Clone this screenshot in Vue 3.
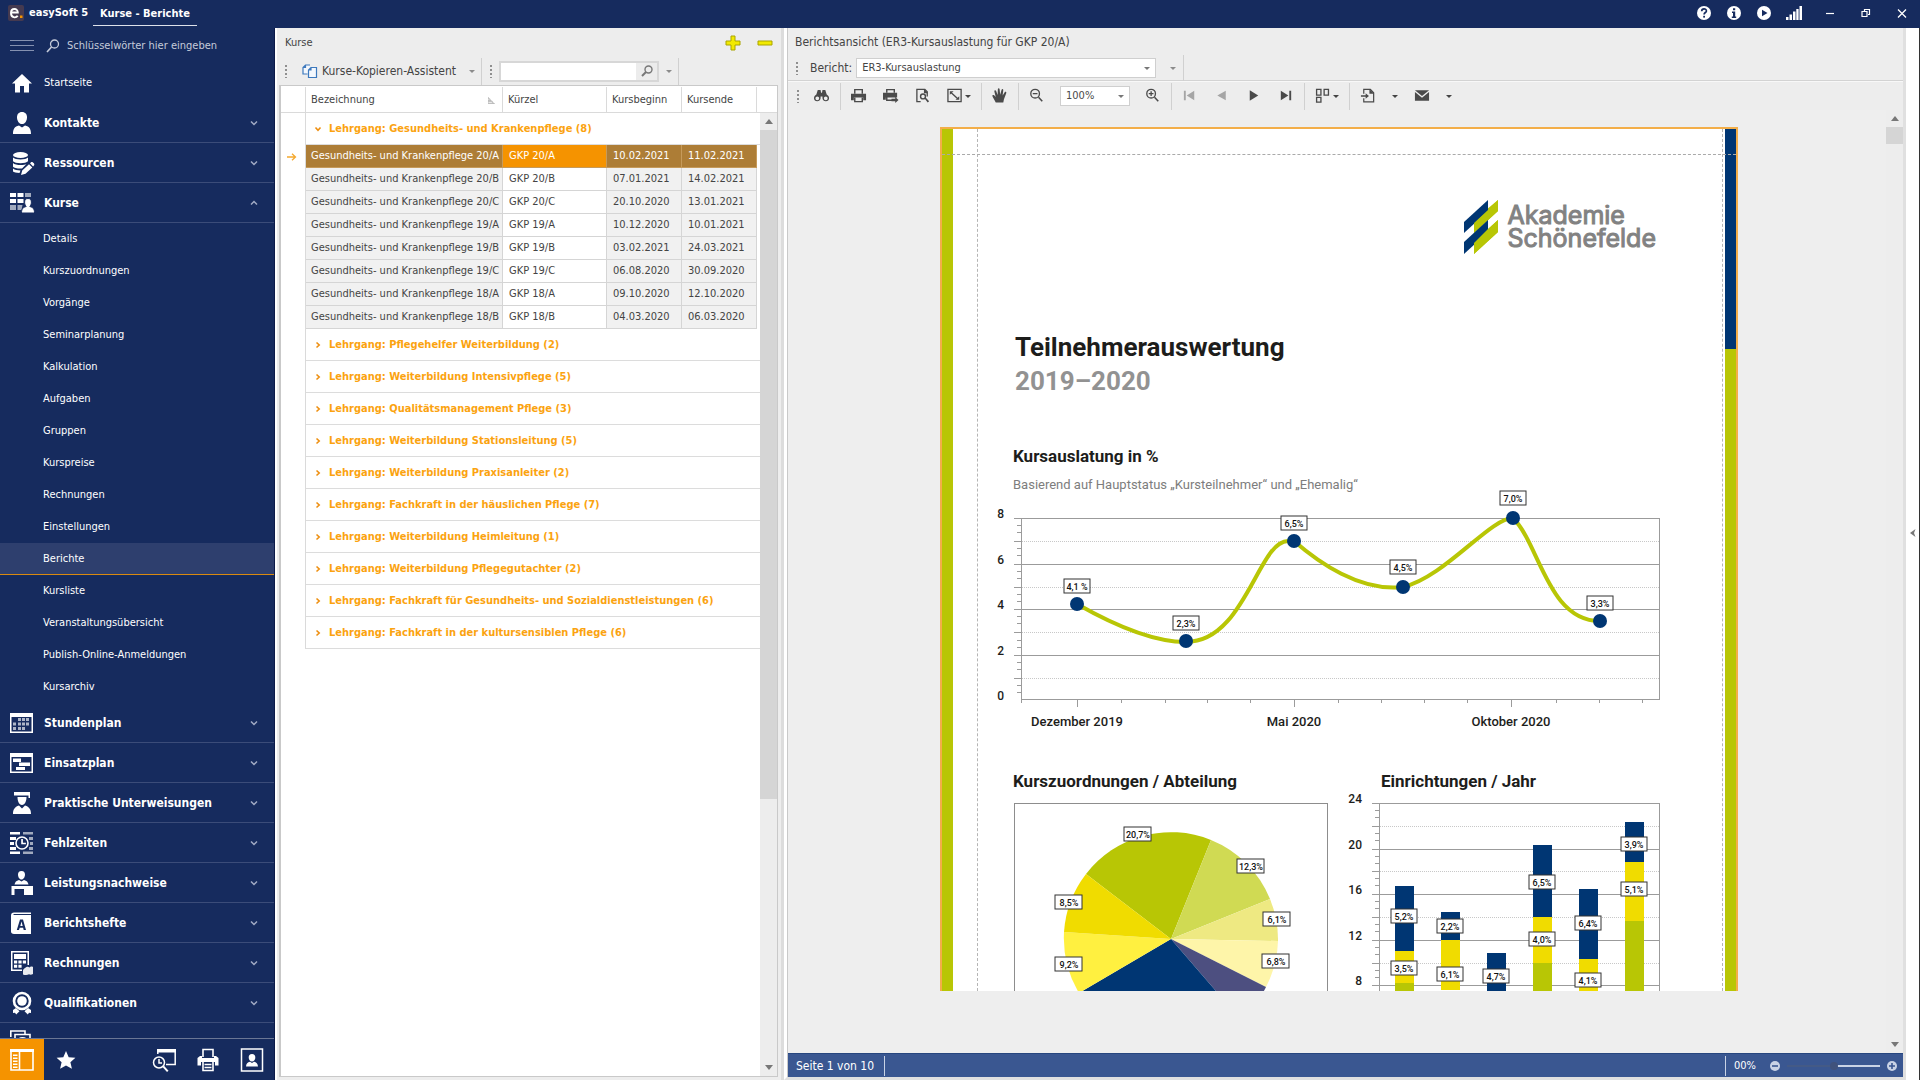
<script setup>
import { ref } from 'vue'

const icons = {
  home: '<path d="M12 3 22 12.500H19V21.500H14V15H10V21.500H5V12.500H2Z"/>',
  person: '<path d="M12 1c3.400 0 5 2.300 5 5.200 0 3.300-1.800 6.800-5 6.800s-5-3.500-5-6.800C7 3.300 8.600 1 12 1z"/><path d="M3 23c0-5 1.500-7.500 6-8.500l3 2 3-2c4.500 1 6 3.500 6 8.500z"/>',
  database: '<ellipse cx="10.500" cy="4" rx="7.500" ry="3"/><path d="M3 6.500c2 2.500 13 2.500 15 0v3.800c-2 2.500-13 2.500-15 0zM3 12c2 2.500 11 2.700 13.500 1L12 17.500C8 17.800 4 17 3 15.800zM3 17.500c2 1.500 4 1.900 7.500 1.900L9.500 22C6 22 4 21.500 3 20.600z"/><path d="M11 24l1.200-4.500 6.800-6.300 3.300 3.300-6.800 6.300zM20 12.300l1.300-1.200c1.200-.6 3.600 1.700 3 3l-1.200 1.300z"/>',
  courses: '<path d="M0 2h6v4H0zM7.500 2h6v4h-6zM0 8h6v4H0zM7.500 8h6v4h-6z"/><path opacity=".6" d="M15 2h6v4h-6zM0 14h6v5H0zM7.500 14h5l-1 5h-4z"/><path stroke="#162b5e" stroke-width="1" d="M18 7.500c2.400 0 3.400 1.600 3.400 3.600 0 2-.7 3.400-1.600 4.400 3 .8 4.700 2.200 4.700 6.500H11.500c0-4.300 1.700-5.700 4.700-6.500-.9-1-1.600-2.400-1.600-4.400 0-2 1-3.600 3.400-3.600z"/>',
  calendar: '<path d="M0 2h23v20H0zM1.500 6v14.500h20V6z" fill-rule="evenodd"/><path opacity=".65" d="M8 7h3v3H8zM12 7h3v3h-3zM16 7h3v3h-3zM3 11.500h3v3H3zM8 11.500h3v3H8zM12 11.500h3v3h-3zM16 11.500h3v3h-3zM3 16h3v3H3zM8 16h3v3H8zM12 16h3v3h-3z"/>',
  plan: '<path d="M0 2h23v20H0zM1.500 6v14.500h20V6z" fill-rule="evenodd"/><path d="M3 7.500h8V11H3zM9 11.500h11V15H9zM6 16h9v3H6z"/>',
  graduate: '<path d="M4 1h16v6h-1.500V4.500H4zM7.500 6h9c0 4-1.500 8-4.500 8S7.500 10 7.500 6z"/><path d="M3 23c0-4.500 1.500-7 6-8.500l3 3 3-3c4.500 1.500 6 4 6 8.500z"/>',
  absence: '<path d="M0 1h10v2.500H0zM0 6h6v3H0zM0 11h4v3H0zM0 16h6v3H0zM0 20.500h10V23H0z"/><path opacity=".6" d="M13 1h10v2.500H13zM19 6h4v3h-4zM20 11h3v3h-3zM19 16h4v3h-4zM13 20.500h10V23H13z"/><circle cx="12" cy="12" r="6" fill="none" stroke="#fff" stroke-width="1.600"/><path d="M11.200 8h1.700v3.700h3v1.600h-4.700z"/>',
  desk: '<path d="M11.500 0c2.500 0 3.500 1.700 3.500 3.600 0 2.400-1.400 5-3.500 5S8 6 8 3.600C8 1.700 9 0 11.500 0zM4.500 13.500c.5-2.600 1.800-3.900 4.500-4.600l2.500 1.500L14 8.900c2.700.7 4 2 4.500 4.600zM1.500 15H23v9h-9v-6H4.500v6h-3z"/>',
  book: '<path d="M4 1.500h17V3H4C3 3 3 4 4 4h17v19H4c-2 0-3-1-3-2.500V4.500C1 2.500 2 1.500 4 1.500z"/><path fill="#162b5e" fill-rule="evenodd" d="M10 8.500h3L16 19h-2.300l-.6-2.300H9.700L9 19H6.800zm1.500 2L10.300 15h2.400z"/>',
  calculator: '<path fill-rule="evenodd" d="M1 0h18v14h-1.500V1.500h-15v17H12V20H1z"/><path d="M4 3h12v5H4zM4 9.500h3.200v3H4zM8.400 9.500h3.200v3H8.400zM12.800 9.500H16v3h-3.200zM4 13.800h3.200v3H4zM8.400 13.800h3.200v3H8.400z"/><path opacity=".9" d="M15 17c2-1.500 3-1.500 4.500-.5.700-1 2-1.300 3.500-.5v7c-1.500 1-3 1-4 .3-1.500 1-4 1-6 .2v-4c.5-1.500 1-2 2-2.500z"/>',
  award: '<circle cx="12" cy="10" r="8" fill="none" stroke="#fff" stroke-width="2.600"/><circle cx="12" cy="10" r="4.800"/><path d="M6 17l3.500 3.300L6.200 23.500l-1.200-1.700-2 .2v-3zM18 17l-3.500 3.300 3.300 3.200 1.200-1.700 2 .2v-3z"/>',
  stack: '<path fill="none" stroke="#fff" stroke-width="1.600" d="M.8 6V0H15v3M5 12V3.500h15V8M8 9c2-3 7-3 9 0"/>',
  layout: '<path fill="none" stroke="#fff" stroke-width="1.600" d="M1 3h22v19H1zM9.500 4v18"/><path d="M0 1h24v3H0zM3 6.500h4.500V8H3zM3 9.500h4.500V11H3zM3 12.500h4.500V14H3zM3 15.500h4.500V17H3zM3 18.500h4.500V20H3z"/>',
  star: '<path d="M12 3l2.700 6.200 6.700.6-5 4.400 1.500 6.600L12 17.400l-5.900 3.400 1.500-6.600-5-4.400 6.700-.6z"/>',
  history: '<path d="M5 1h19v3.500H5z"/><path fill="none" stroke="#fff" stroke-width="1.500" d="M5.800 6V3M23.200 3v13.500H14"/><circle cx="7" cy="14.500" r="5.500" fill="none" stroke="#fff" stroke-width="1.500"/><path fill="none" stroke="#fff" stroke-width="1.500" d="M7 11v4h3"/><path d="M10.500 19l1.500-1.300 4.500 5-1.500 1.300z"/>',
  printer: '<path fill="none" stroke="#fff" stroke-width="1.600" d="M7 9V1.500h10V9"/><path d="M4 8h2v2h12V8h2l2.500 2v7.500H19V14H5v3.500H1.500V10z"/><path fill="none" stroke="#fff" stroke-width="1.600" d="M7 14v8.500h10V14M8.500 16.500h7M8.500 19.500h7"/>',
  card: '<path fill="none" stroke="#fff" stroke-width="1.500" d="M1.500 1h21v22h-21z"/><path d="M12 6c2.300 0 3.300 1.500 3.300 3.400 0 2-1.300 4.100-3.300 4.100s-3.300-2.100-3.300-4.100C8.700 7.500 9.700 6 12 6zM6 18.500c.3-3 1.500-4.200 4-4.700l2 1.200 2-1.200c2.500.5 3.700 1.700 4 4.700z"/>',
}

const tools = {
  find: '<path fill-rule="evenodd" d="M4 2h3l.5 3h1L9 2h3l1.500 5c1.500 1 2.500 2.200 2.500 4 0 2-1.500 3.200-3.400 3.200S9.200 13 9 11V9H7v2c-.2 2-1.700 3.200-3.600 3.200S0 13 0 11c0-1.800 1-3 2.500-4zM3.500 9a2 2 0 100 4 2 2 0 000-4zm9 0a2 2 0 100 4 2 2 0 000-4z"/>',
  print: '<path fill="none" stroke="currentColor" stroke-width="1.500" d="M4 6V1.700h8V6"/><path d="M0 6h16v7h-3v-3H3v3H0z"/><path fill="none" stroke="currentColor" stroke-width="1.500" d="M4 10v4.500h8V10"/>',
  quick: '<path fill="none" stroke="currentColor" stroke-width="1.500" d="M4 5V1.700h8V5M4 9v4h6"/><path d="M0 5h15v5H3v2.500H0zM13 9.500l3.500 3.200-3.500 3.200V14H9v-2.500h4z"/>',
  setup: '<path fill="none" stroke="currentColor" stroke-width="1.400" d="M6 14.500H2v-13h8.500L13 4v5"/><circle cx="8.500" cy="9" r="2.600" fill="none" stroke="currentColor" stroke-width="1.500"/><path d="M10 11l1.300-1 3.700 4-1.500 1.300zM9.500 1v4.500H14z"/>',
  scale: '<path fill="none" stroke="currentColor" stroke-width="1.400" d="M1 1.500h14v13H1zM4.500 5l7 6.500"/><path d="M3 3.500h4L3 7.300zM13 12.500H9l4-3.800z"/>',
  hand: '<path d="M4 15.500C3 13 .5 9.500.3 8.200c0-1 1.200-1.200 2-.4L4 9.500 2.500 3.600c0-1.200 1.400-1.500 1.900-.4L6 7.500 6.200 1.200c.2-1.200 1.700-1.200 1.900 0L8.700 7.300l1.500-5.500c.5-1 1.800-.7 1.800.4L11.300 8l2.200-3.600c.8-.8 1.900-.2 1.700.8L12.700 12l-.7 3.500z"/>',
  minus: '<circle cx="6.500" cy="6" r="4.600" fill="none" stroke="currentColor" stroke-width="1.400"/><path d="M4 5.300h5v1.400H4zM9.500 10.300l1.200-1 4 4.200-1.200 1.200z"/>',
  plus: '<circle cx="6.500" cy="6" r="4.600" fill="none" stroke="currentColor" stroke-width="1.400"/><path d="M4 5.300h5v1.400H4zM5.800 3.500h1.400v5H5.800zM9.500 10.300l1.200-1 4 4.200-1.200 1.200z"/>',
  first: '<path d="M2 3h2v10H2zM13 3v10L5 8z"/>',
  prev: '<path d="M12.500 3v10L3.500 8z"/>',
  next: '<path d="M4 2.500v11L13 8z"/>',
  last: '<path d="M12 3h2v10h-2zM3 3v10l8-5z"/>',
  pages: '<path fill="none" stroke="currentColor" stroke-width="1.400" d="M1.700 1.500h4.600v6H1.700zM9.700 1.500h4.600v6H9.700zM1.700 10h4.600v5H1.700z"/>',
  export: '<path fill="none" stroke="currentColor" stroke-width="1.300" d="M4 6V1.500h7L14.500 5v9.800H4V11"/><path d="M10 1v5h5zM1 7.800h5V5.500l3.500 3L6 11.500V9.200H1z"/>',
  mail: '<path d="M1 2.500h15l-7.500 6zM1 4.300l7.500 6 7.500-6V13.500H1z"/>',
}

const subItems = ['Details', 'Kurszuordnungen', 'Vorgänge', 'Seminarplanung', 'Kalkulation', 'Aufgaben', 'Gruppen', 'Kurspreise', 'Rechnungen', 'Einstellungen', 'Berichte', 'Kursliste', 'Veranstaltungsübersicht', 'Publish-Online-Anmeldungen', 'Kursarchiv']
const topItems = [
  { label: 'Kontakte', icon: 'person' },
  { label: 'Ressourcen', icon: 'database' },
  { label: 'Kurse', icon: 'courses', open: true },
]
const lowerItems = [
  { label: 'Stundenplan', icon: 'calendar' },
  { label: 'Einsatzplan', icon: 'plan' },
  { label: 'Praktische Unterweisungen', icon: 'graduate' },
  { label: 'Fehlzeiten', icon: 'absence' },
  { label: 'Leistungsnachweise', icon: 'desk' },
  { label: 'Berichtshefte', icon: 'book' },
  { label: 'Rechnungen', icon: 'calculator' },
  { label: 'Qualifikationen', icon: 'award' },
]

const courses = [
  ['20/A', '10.02.2021', '11.02.2021'],
  ['20/B', '07.01.2021', '14.02.2021'],
  ['20/C', '20.10.2020', '13.01.2021'],
  ['19/A', '10.12.2020', '10.01.2021'],
  ['19/B', '03.02.2021', '24.03.2021'],
  ['19/C', '06.08.2020', '30.09.2020'],
  ['18/A', '09.10.2020', '12.10.2020'],
  ['18/B', '04.03.2020', '06.03.2020'],
]
const groups = [
  'Pflegehelfer Weiterbildung (2)',
  'Weiterbildung Intensivpflege (5)',
  'Qualitätsmanagement Pflege (3)',
  'Weiterbildung Stationsleitung (5)',
  'Weiterbildung Praxisanleiter (2)',
  'Fachkraft in der häuslichen Pflege (7)',
  'Weiterbildung Heimleitung (1)',
  'Weiterbildung Pflegegutachter (2)',
  'Fachkraft für Gesundheits- und Sozialdienstleistungen (6)',
  'Fachkraft in der kultursensiblen Pflege (6)',
]

const zoom = ref(50)

/* Line chart */
const lineSolid = [33, 79, 124, 170]
const lineDotted = [56, 102, 147, 193]
const lineMinor = [40, 47, 63, 70, 86, 93, 109, 116, 131, 138, 155, 162, 177, 184, 200, 207]
const lineY = [[8, 33], [6, 79], [4, 124], [2, 170], [0, 215]]
const lineXMinor = [26, 126, 170, 212, 255, 343, 386, 429, 472, 561, 604, 647]
const lineX = [[82, 'Dezember 2019'], [299, 'Mai 2020'], [516, 'Oktober 2020']]
const points = [
  { x: 82, y: 119, t: '4,1 %', ly: 94 },
  { x: 191, y: 156, t: '2,3%', ly: 131 },
  { x: 299, y: 56, t: '6,5%', ly: 31 },
  { x: 408, y: 102, t: '4,5%', ly: 75 },
  { x: 518, y: 33, t: '7,0%', ly: 6 },
  { x: 605, y: 136, t: '3,3%', ly: 111 },
]

/* Pie chart: boundary vectors from the centre, clockwise */
const slices = [
  { a: [-85, -65], b: [40, -99], c: '#b8c605' },
  { a: [40, -99], b: [99, -40], c: '#d0da53' },
  { a: [99, -40], b: [107, 2], c: '#eee982' },
  { a: [107, 2], b: [95, 48], c: '#fef5a9' },
  { a: [95, 48], b: [70, 81], c: '#4d4f80' },
  { a: [70, 81], b: [-92, 54], c: '#003673' },
  { a: [-92, 54], b: [-107, -7], c: '#fff040' },
  { a: [-107, -7], b: [-85, -65], c: '#f0dc00' },
]
const slicePath = (s) => `M157 136L${157 + s.a[0]} ${136 + s.a[1]}A107 107 0 0 1 ${157 + s.b[0]} ${136 + s.b[1]}Z`
const pieLabels = [[125, 24, '20,7%'], [238, 56, '12,3%'], [56, 92, '8,5%'], [264, 109, '6,1%'], [56, 154, '9,2%'], [263, 151, '6,8%']]

/* Bar chart */
const barY = [[24, 8], [20, 54], [16, 99], [12, 145], [8, 190]]
const barDotted = [31, 76, 122, 168]
const barMinor = [15, 22, 38, 45, 61, 68, 83, 90, 106, 113, 129, 136, 152, 159, 175, 182]
const bars = [
  { x: 50, s: [[91, 65, 'n'], [156, 32, 'y'], [188, 8, 'g']], l: [[114, '5,2%'], [166, '3,5%']] },
  { x: 96, s: [[117, 28, 'n'], [145, 50, 'y']], l: [[124, '2,2%'], [172, '6,1%']] },
  { x: 142, s: [[158, 38, 'n']], l: [[174, '4,7%']] },
  { x: 188, s: [[50, 72, 'n'], [122, 46, 'y'], [168, 28, 'g']], l: [[80, '6,5%'], [137, '4,0%']] },
  { x: 234, s: [[94, 70, 'n'], [164, 32, 'y']], l: [[121, '6,4%'], [178, '4,1%']] },
  { x: 280, s: [[27, 40, 'n'], [67, 59, 'y'], [126, 70, 'g']], l: [[42, '3,9%'], [87, '5,1%']] },
]
</script>

<template>
  <div class="app">
    <header class="titlebar">
      <svg class="logo" viewBox="0 0 16 16" aria-hidden="true">
        <rect width="16" height="16" rx="2" fill="#453a50" />
        <path d="M3.500 7.500h6.300C9.800 2.800 3 2.800 3 8c0 5 5 5.200 6.700 2.800" fill="none" stroke="#fff" stroke-width="1.900" />
        <rect x="12" y="10.500" width="2.500" height="2.500" fill="#f59300" />
      </svg>
      <span class="brand">easySoft 5</span>
      <span class="tab">Kurse - Berichte</span>
      <div class="sys">
        <button aria-label="Hilfe"><svg viewBox="0 0 16 16"><circle cx="8" cy="8" r="7" fill="#fff" /><path d="M5.700 6.300c0-3.300 4.700-3 4.700-.4 0 1.600-2.300 1.700-2.300 3.500" fill="none" stroke="#162b5e" stroke-width="1.700" /><rect x="7.200" y="10.800" width="1.800" height="1.800" fill="#162b5e" /></svg></button>
        <button aria-label="Info"><svg viewBox="0 0 16 16"><circle cx="8" cy="8" r="7" fill="#fff" /><path d="M7 3.200h2.200v2H7zM6 6.500h3.200v5h1V13H5.800v-1.500H7V8H6z" fill="#162b5e" /></svg></button>
        <button aria-label="Start"><svg viewBox="0 0 16 16"><circle cx="8" cy="8" r="7" fill="#fff" /><path d="M6 4.800L11.500 8 6 11.200z" fill="#162b5e" /></svg></button>
        <button aria-label="Verbindung"><svg viewBox="0 0 16 16"><path d="M0 12h2.500v3H0zM3.500 9.500H6V15H3.500zM7 6.500h2.500V15H7zM10.300 4h2.300v11h-2.300zM13.500 1H16v14h-2.500z" fill="#fff" /></svg></button>
        <button class="win" aria-label="Minimieren"><svg viewBox="0 0 16 16"><path d="M4 8.500h8" stroke="#fff" stroke-width="1.200" /></svg></button>
        <button class="win" aria-label="Verkleinern"><svg viewBox="0 0 16 16"><path d="M4 6.500h5v5H4zM6.500 6V4.500h5v5H10" fill="none" stroke="#fff" stroke-width="1.200" /></svg></button>
        <button class="win" aria-label="Schließen"><svg viewBox="0 0 16 16"><path d="M4 4.500l8 8M12 4.500l-8 8" stroke="#fff" stroke-width="1.300" /></svg></button>
      </div>
    </header>

    <div class="body">
      <aside class="sidebar">
        <div class="search">
          <button class="burger" aria-label="Menü"><i></i><i></i><i></i></button>
          <svg viewBox="0 0 14 14" aria-hidden="true"><circle cx="8.500" cy="5" r="4" fill="none" stroke="#c5cbda" stroke-width="1.300" /><path d="M5.500 8L1 13" stroke="#c5cbda" stroke-width="1.600" /></svg>
          <input type="text" aria-label="Suche" placeholder="Schlüsselwörter hier eingeben" />
        </div>
        <nav class="nav">
          <a href="#" class="row start"><svg viewBox="0 0 24 24" v-html="icons.home"></svg>Startseite</a>
          <button v-for="i in topItems" :key="i.label" class="row main">
            <svg viewBox="0 0 24 24" v-html="icons[i.icon]"></svg><span>{{ i.label }}</span>
            <svg class="chev" :class="{ up: i.open }" viewBox="0 0 8 6"><path d="M1 1.500l3 3 3-3" /></svg>
          </button>
          <a v-for="s in subItems" :key="s" href="#" class="sub" :class="{ active: s === 'Berichte' }">{{ s }}</a>
          <button v-for="i in lowerItems" :key="i.label" class="row main">
            <svg viewBox="0 0 24 24" v-html="icons[i.icon]"></svg><span>{{ i.label }}</span>
            <svg class="chev" viewBox="0 0 8 6"><path d="M1 1.500l3 3 3-3" /></svg>
          </button>
          <button class="row main" aria-label="Weitere"><svg viewBox="0 0 24 24" v-html="icons.stack"></svg></button>
        </nav>
        <div class="dock">
          <button class="on" aria-label="Navigation"><svg viewBox="0 0 24 24" v-html="icons.layout"></svg></button>
          <button aria-label="Favoriten"><svg viewBox="0 0 24 24" v-html="icons.star"></svg></button>
          <span class="grow"></span>
          <button aria-label="Verlauf"><svg viewBox="0 0 24 24" v-html="icons.history"></svg></button>
          <button aria-label="Drucken"><svg viewBox="0 0 24 24" v-html="icons.printer"></svg></button>
          <button aria-label="Profil"><svg viewBox="0 0 24 24" v-html="icons.card"></svg></button>
        </div>
      </aside>

      <section class="courses">
        <div class="head">
          <h2>Kurse</h2>
          <button aria-label="Hinzufügen"><svg viewBox="0 0 16 16"><path d="M6 1h4v5h5v4h-5v5H6v-5H1V6h5z" fill="#f2ea00" stroke="#a9a400" /></svg></button>
          <button aria-label="Entfernen"><svg viewBox="0 0 16 16"><path d="M1 6h14v4H1z" fill="#f2ea00" stroke="#a9a400" /></svg></button>
        </div>
        <div class="tools">
          <i class="grip"></i>
          <button class="copy"><svg viewBox="0 0 16 16"><path d="M5.500 11H1V4.500L3.500 2H8M6.500 14.500V7L9 4.500h5.500v10zM6.500 7H9V4.500M1 4.500h2.500V2" fill="#f4f8fd" stroke="#3d79bd" stroke-width="1.200" /></svg>Kurse-Kopieren-Assistent</button>
          <i class="caret grey"></i><i class="sep"></i><i class="grip"></i>
          <div class="find">
            <input type="text" aria-label="Kurs suchen" />
            <button aria-label="Suchen"><svg viewBox="0 0 14 14"><circle cx="8.500" cy="5.500" r="3.500" fill="none" stroke="#777" stroke-width="1.400" /><path d="M6 8L2 12" stroke="#777" stroke-width="2" /></svg></button>
          </div>
          <i class="caret grey"></i><i class="sep"></i>
        </div>
        <div class="frame">
          <div class="scroller">
            <table>
              <colgroup><col class="c0" /><col class="c1" /><col class="c2" /><col class="c3" /><col class="c4" /><col /></colgroup>
              <thead>
                <tr>
                  <th></th>
                  <th>Bezeichnung<svg class="sort" viewBox="0 0 8 8"><path d="M0 0v8h8M0 2h2v2H0M0 5h5v2H0" fill="#bbb" stroke="#bbb" stroke-width="1" /></svg></th>
                  <th>Kürzel</th><th>Kursbeginn</th><th>Kursende</th><th></th>
                </tr>
              </thead>
              <tbody>
                <tr class="group">
                  <td></td>
                  <td colspan="5"><button><svg viewBox="0 0 8 8"><path d="M1.500 2.500L4 5.200l2.500-2.700" /></svg>Lehrgang: Gesundheits- und Krankenpflege (8)</button></td>
                </tr>
                <tr v-for="(c, n) in courses" :key="c[0]" class="data" :class="{ sel: n === 0 }">
                  <td><svg v-if="n === 0" viewBox="0 0 10 8"><path d="M0 4h8.500M5 .8L8.500 4 5 7.200" fill="none" stroke="#f5a92f" stroke-width="1.300" /></svg></td>
                  <td>Gesundheits- und Krankenpflege {{ c[0] }}</td>
                  <td>GKP {{ c[0] }}</td>
                  <td>{{ c[1] }}</td>
                  <td>{{ c[2] }}</td>
                  <td></td>
                </tr>
                <tr v-for="g in groups" :key="g" class="group">
                  <td></td>
                  <td colspan="5"><button><svg viewBox="0 0 8 8"><path d="M2.500 1.500L5.200 4 2.500 6.500" /></svg>Lehrgang: {{ g }}</button></td>
                </tr>
              </tbody>
            </table>
          </div>
          <div class="vbar">
            <div class="cap"></div>
            <button class="up" aria-label="Nach oben"></button>
            <div class="track"><div class="thumb"></div></div>
            <button class="down" aria-label="Nach unten"></button>
          </div>
        </div>
      </section>

      <section class="report">
        <h2>Berichtsansicht (ER3-Kursauslastung für GKP 20/A)</h2>
        <div class="pick">
          <i class="grip"></i>
          <label for="rep">Bericht:</label>
          <span class="select wide"><select id="rep"><option>ER3-Kursauslastung</option></select></span>
          <i class="caret grey"></i><i class="sep"></i>
        </div>
        <div class="bar">
          <i class="grip"></i>
          <button aria-label="Suchen"><svg viewBox="0 0 17 17" v-html="tools.find"></svg></button>
          <i class="sep"></i>
          <button aria-label="Drucken"><svg viewBox="0 0 17 17" v-html="tools.print"></svg></button>
          <button aria-label="Schnelldruck" class="gap"><svg viewBox="0 0 17 17" v-html="tools.quick"></svg></button>
          <button aria-label="Seite einrichten" class="gap"><svg viewBox="0 0 17 17" v-html="tools.setup"></svg></button>
          <button aria-label="Skalieren" class="gap"><svg viewBox="0 0 17 17" v-html="tools.scale"></svg><i class="caret"></i></button>
          <i class="sep"></i>
          <button aria-label="Verschieben"><svg viewBox="0 0 17 17" v-html="tools.hand"></svg></button>
          <i class="sep"></i>
          <button aria-label="Verkleinern"><svg viewBox="0 0 17 17" v-html="tools.minus"></svg></button>
          <span class="select small"><select aria-label="Zoom"><option>100%</option></select></span>
          <button aria-label="Vergrößern"><svg viewBox="0 0 17 17" v-html="tools.plus"></svg></button>
          <i class="sep"></i>
          <button aria-label="Erste Seite" class="off"><svg viewBox="0 0 17 17" v-html="tools.first"></svg></button>
          <button aria-label="Vorige Seite" class="off gap"><svg viewBox="0 0 17 17" v-html="tools.prev"></svg></button>
          <button aria-label="Nächste Seite" class="gap"><svg viewBox="0 0 17 17" v-html="tools.next"></svg></button>
          <button aria-label="Letzte Seite" class="gap"><svg viewBox="0 0 17 17" v-html="tools.last"></svg></button>
          <i class="sep"></i>
          <button aria-label="Mehrere Seiten"><svg viewBox="0 0 17 17" v-html="tools.pages"></svg><i class="caret"></i></button>
          <i class="sep"></i>
          <button aria-label="Exportieren"><svg viewBox="0 0 17 17" v-html="tools.export"></svg></button>
          <i class="caret gap"></i>
          <button aria-label="Senden" class="gap"><svg viewBox="0 0 17 17" v-html="tools.mail"></svg></button>
          <i class="caret gap"></i>
        </div>

        <div class="viewer">
          <div class="desk">
            <article class="page">
              <div class="edge left"></div>
              <div class="sheet">
                <div class="academy">
                  <svg viewBox="0 0 34 54" aria-hidden="true">
                    <path d="M10 20L34 0V11L10 33z" fill="#b8c605" /><path d="M0 22L24 0V11L0 33z" fill="#003673" /><path d="M10 23L24 10L34 0V11L10 33z" fill="#b8c605" />
                    <path d="M10 42L34 20V32L10 54z" fill="#b8c605" /><path d="M0 42L24 20V32L0 54z" fill="#003673" /><path d="M24 29L34 20V32L10 54V43z" fill="#b8c605" />
                  </svg>
                  <div><p>Akademie</p><p>Schönefelde</p></div>
                </div>
                <h1>Teilnehmerauswertung</h1>
                <p class="years">2019–2020</p>
                <h3>Kursauslatung in %</h3>
                <p class="note">Basierend auf Hauptstatus „Kursteilnehmer“ und „Ehemalig“</p>

                <svg class="line" viewBox="0 0 670 250" role="img" aria-label="Kursauslastung">
                  <g class="solid">
                    <path v-for="y in lineSolid" :key="y" :d="`M19 ${y}.5H665`" />
                    <path d="M26.500 33V218M26 214.500H665M664.500 33V214" />
                    <path v-for="y in lineDotted" :key="y" :d="`M19 ${y}.5H26`" />
                    <path v-for="y in lineMinor" :key="y" :d="`M22 ${y}.5H26`" />
                    <path v-for="x in lineXMinor" :key="x" :d="`M${x}.5 214V218`" />
                    <path v-for="x in lineX" :key="x[0]" :d="`M${x[0]}.5 214V222`" />
                  </g>
                  <path v-for="y in lineDotted" :key="y" class="dotted" :d="`M27 ${y}.5H664`" />
                  <text v-for="t in lineY" :key="t[0]" class="axis" x="9" :y="t[1]">{{ t[0] }}</text>
                  <text v-for="t in lineX" :key="t[0]" class="month" :x="t[0]" y="241">{{ t[1] }}</text>
                  <path class="curve" d="M82 119C110 135 155 157 191 157C250 157 263 56 293 56Q296 56 299 56C323 77 365 107 408 102C450 92 495 33 518 33C545 60 553 136 605 136" />
                  <g v-for="p in points" :key="p.x">
                    <circle :cx="p.x" :cy="p.y" r="7" fill="#003673" />
                    <rect class="tag" :x="p.x - 13" :y="p.ly" width="26" height="14" />
                    <text class="val" :x="p.x" :y="p.ly + 11">{{ p.t }}</text>
                  </g>
                </svg>

                <div class="duo">
                  <div class="half">
                    <h3>Kurszuordnungen / Abteilung</h3>
                    <svg class="pie" viewBox="0 0 315 250" role="img" aria-label="Kurszuordnungen nach Abteilung">
                      <rect x="0.500" y="0.500" width="313" height="260" fill="none" stroke="#8d8d8d" />
                      <path v-for="s in slices" :key="s.c" :d="slicePath(s)" :fill="s.c" />
                      <g v-for="l in pieLabels" :key="l[2]">
                        <rect class="tag" :x="l[0] - 15" :y="l[1]" width="27" height="14" />
                        <text class="val" :x="l[0] - 1" :y="l[1] + 11">{{ l[2] }}</text>
                      </g>
                    </svg>
                  </div>
                  <div class="half second">
                    <h3>Einrichtungen / Jahr</h3>
                    <svg class="bars" viewBox="0 0 320 250" role="img" aria-label="Einrichtungen pro Jahr">
                      <g class="solid">
                        <path v-for="y in barY" :key="y[0]" :d="`M27 ${y[1]}.5H315`" />
                        <path v-for="y in barDotted" :key="y" :d="`M27 ${y}.5H34`" />
                        <path v-for="y in barMinor" :key="y" :d="`M30 ${y}.5H34`" />
                        <path d="M34.500 8V250M314.500 8V250" />
                      </g>
                      <path v-for="y in barDotted" :key="y" class="dotted" :d="`M35 ${y}.5H314`" />
                      <text v-for="t in barY" :key="t[0]" class="axis" x="17" :y="t[1]">{{ t[0] }}</text>
                      <g v-for="b in bars" :key="b.x">
                        <rect v-for="s in b.s" :key="s[0]" :class="s[2]" :x="b.x" :y="s[0]" width="19" :height="s[1]" />
                        <g v-for="l in b.l" :key="l[0]">
                          <rect class="tag" :x="b.x - 4" :y="l[0]" width="26" height="14" />
                          <text class="val" :x="b.x + 9" :y="l[0] + 11">{{ l[1] }}</text>
                        </g>
                      </g>
                    </svg>
                  </div>
                </div>
              </div>
              <div class="edge right"></div>
              <div class="guide"></div>
            </article>
          </div>
          <div class="vbar plain">
            <button class="up" aria-label="Nach oben"></button>
            <div class="track"><div class="thumb"></div></div>
            <button class="down" aria-label="Nach unten"></button>
          </div>
        </div>

        <footer class="status">
          <span class="pg">Seite 1 von 10</span>
          <span class="pct">00%</span>
          <button aria-label="Kleiner"><svg viewBox="0 0 12 12"><circle cx="6" cy="6" r="5" fill="#c9d3e6" /><path d="M3 6h6" stroke="#3a5791" stroke-width="1.600" /></svg></button>
          <input v-model="zoom" type="range" min="0" max="100" aria-label="Zoomstufe" />
          <button aria-label="Größer"><svg viewBox="0 0 12 12"><circle cx="6" cy="6" r="5" fill="#c9d3e6" /><path d="M3 6h6M6 3v6" stroke="#3a5791" stroke-width="1.600" /></svg></button>
        </footer>
      </section>

      <button class="rail" aria-label="Seitenleiste einblenden"><svg viewBox="0 0 6 8"><path d="M5.500 0L0 4l5.500 4L4 4z" fill="#777" /></svg></button>
    </div>
  </div>
</template>

<style>
body { margin: 0; background: #ededed; }
</style>

<style scoped>
.app { height: 100vh; display: flex; flex-direction: column; font: 11px/16px "DejaVu Sans Condensed", "DejaVu Sans", sans-serif; color: #444; background: #162b5e; overflow: hidden; }
.app *, .app *::before, .app *::after { box-sizing: border-box; }
button { font: inherit; color: inherit; background: none; border: 0; padding: 0; display: flex; align-items: center; }
input, select { font: inherit; color: inherit; border: 0; outline: 0; padding: 0; min-width: 0; }
h1, h2, h3, p { margin: 0; font-weight: 400; }
a { color: inherit; text-decoration: none; }
svg { flex: none; display: block; fill: currentColor; }

.titlebar { height: 28px; flex: none; display: flex; align-items: center; color: #fff; font-weight: 700; padding: 0 10px 2px 8px; }
.logo { width: 16px; height: 16px; }
.brand { margin-left: 5px; width: 64px; white-space: nowrap; }
.tab { height: 25px; line-height: 25px; padding: 0 7px; border-bottom: 1px solid #dde1ea; }
.sys { margin-left: auto; display: flex; gap: 14px; }
.sys svg { width: 16px; height: 16px; }
.sys .win { margin-left: 6px; }

.body { flex: 1; min-height: 0; display: flex; }
.sidebar { width: 275px; flex: none; display: flex; flex-direction: column; color: #fff; border-right: 1px solid #0c1a48; }
.search { height: 35px; display: flex; align-items: center; padding: 0 10px; color: #c5cbda; }
.burger { width: 24px; flex-direction: column; gap: 4px; margin-right: 12px; }
.burger i { width: 24px; height: 1px; background: #8591b0; }
.search svg { width: 14px; height: 14px; }
.search input { flex: 1; margin-left: 7px; background: none; }
.search input::placeholder { color: #c5cbda; opacity: 1; }
.nav { flex: 1; min-height: 0; overflow: hidden; }
.row { display: flex; align-items: center; width: 100%; height: 40px; padding: 0 16px 0 10px; }
.row svg { width: 24px; height: 24px; margin-right: 10px; overflow: visible; }
.main { font-size: 12px; font-weight: 700; border-bottom: 1px solid #3b4c79; }
.row .chev { width: 8px; height: 6px; margin: 0 0 0 auto; fill: none; stroke: #a2abc4; stroke-width: 1.500; }
.row .chev.up { transform: rotate(180deg); }
.sub { display: block; height: 32px; line-height: 32px; padding-left: 43px; }
.sub.active { background: #2e3f6e; border-bottom: 1px solid #d98a10; }
.dock { height: 42px; flex: none; display: flex; border-top: 1px solid #6a7694; }
.dock button { width: 44px; justify-content: center; }
.dock .on { background: #f59300; }
.dock svg { width: 24px; height: 24px; overflow: visible; }
.grow { flex: 1; }

.courses { width: 509px; flex: none; display: flex; flex-direction: column; background: #ededed; border-left: 2px solid #fff; padding: 0 3px 3px 2px; border-right: 3px solid #dcdcdc; }
.head { height: 29px; display: flex; align-items: center; padding: 0 5px 0 6px; gap: 16px; }
h2 { font-size: 11px; line-height: 28px; flex: 1; }
.head svg { width: 16px; height: 16px; }
.tools { height: 28px; display: flex; align-items: center; padding-left: 6px; }
.grip { width: 2px; height: 13px; flex: none; background: repeating-linear-gradient(#8f8f8f 0 2px, transparent 2px 4px); }
.sep { width: 1px; height: 27px; background: #d0d0d0; }
.caret { width: 0; height: 0; flex: none; border: 3px solid transparent; border-top-color: #444; border-bottom: 0; }
.caret.grey { border-top-color: #8b8b8b; }
.copy { font-size: 12px; margin: 0 13px 0 15px; white-space: nowrap; }
.copy svg { width: 16px; height: 16px; margin-right: 4px; }
.tools .sep { margin-left: 6px; }
.tools .sep + .grip { margin: 0 7px 0 8px; }
.find { display: flex; width: 160px; height: 21px; border: 2px solid #d7d7d7; background: #fff; margin-right: 7px; }
.find input { flex: 1; background: #fff; }
.find button { width: 21px; background: #ececec; justify-content: center; }
.find svg { width: 14px; height: 14px; }
.frame { flex: 1; min-height: 0; display: flex; background: #fff; border: 1px solid #c9c9c9; border-width: 1px 1px 1px 2px; padding-top: 1px; }
.scroller { flex: 1; overflow: hidden; }
table { width: 100%; table-layout: fixed; border-collapse: separate; border-spacing: 0; }
.c0 { width: 25px; } .c1 { width: 197px; } .c2 { width: 104px; } .c3, .c4 { width: 75px; }
th { height: 26px; padding: 0 0 0 5px; text-align: left; font-weight: 400; border-right: 1px solid #dadada; border-bottom: 1px solid #dadada; line-height: 16px; }
th:last-child { border-right: 0; }
.sort { float: right; width: 7px; height: 7px; margin: 5px 7px 0 0; }
td { padding: 0; border-right: 1px solid #d5d5d5; white-space: nowrap; }
.group td { height: 32px; border-bottom: 1px solid #dcdcdc; }
.group td:first-child, .data td:first-child { border-bottom: 0; border-right-color: #dadada; }
.group button { font-weight: 700; color: #fba310; margin-left: 8px; }
.group button svg { width: 8px; height: 8px; margin-right: 7px; fill: none; stroke: #ee8f10; stroke-width: 1.600; }
.group td:last-child { border-right: 0; }
.data td { height: 23px; line-height: 18px; padding-left: 6px; background: #f1f1f1; border-bottom: 1px solid #d5d5d5; }
.data td:first-child, .data td:last-child { background: #fff; }
.data td:last-child { border: 0; padding: 0; }
.data td:nth-child(3) { background: #fff; }
.data td:nth-child(2) { padding-left: 5px; }
.data td svg { width: 10px; height: 8px; }
.sel td:nth-child(n+2):nth-child(-n+5) { background: #ad7d36; color: #fff; border-color: #c69a5a; }
.app .sel td:nth-child(3) { background: #f59300; }

.vbar { width: 17px; flex: none; display: flex; flex-direction: column; background: #ededed; }
.cap { height: 26px; flex: none; background: #fff; border-bottom: 1px solid #dadada; }
.vbar button { height: 17px; flex: none; justify-content: center; }
.up::before, .down::before { content: ""; border: 4px solid transparent; border-top-width: 0; border-bottom: 5px solid #777; }
.down::before { border-top: 5px solid #777; border-bottom-width: 0; }
.track { flex: 1; }
.thumb { height: 72%; background: #d5d5d5; }

.report { flex: 1; min-width: 0; display: flex; flex-direction: column; background: #ededed; border-left: 3px solid #fff; border-right: 3px solid #e0e0e0; border-bottom: 3px solid #e0e0e0; padding-left: 1px; box-shadow: inset 1px 0 #c9c9c9; }
.report h2 { flex: none; font-size: 12px; padding-left: 7px; line-height: 28px; }
.pick { height: 25px; flex: none; display: flex; align-items: center; padding-left: 8px; border-bottom: 1px solid #d3d3d3; }
.pick label { font-size: 12px; margin: 0 4px 0 12px; }
.pick .caret { margin: 0 7px 0 14px; }
.select { position: relative; display: block; height: 20px; border: 1px solid #cfcfcf; background: #fff; }
.select select { appearance: none; width: 100%; height: 18px; padding-left: 5px; background: #fff; display: block; }
.select::after { content: ""; position: absolute; right: 5px; top: 8px; border: 3px solid transparent; border-top-color: #777; border-bottom: 0; }
.wide { width: 300px; }
.small { width: 70px; margin: 0 15px; }
.bar { height: 29px; flex: none; display: flex; align-items: center; padding-left: 9px; color: #4a4a4a; border-top: 1px solid #f8f8f8; }
.bar svg { width: 16px; height: 16px; overflow: visible; }
.bar button .caret { margin-left: 2px; }
.bar .grip + button { margin-left: 15px; }
.bar .sep { margin: 0 10px; }
.bar .off { color: #a5a5a5; }
.bar .gap { margin-left: 16px; }
.viewer { flex: 1; min-height: 0; display: flex; background: #eee; }
.desk { flex: 1; min-width: 0; display: flex; justify-content: center; padding: 17px 0 62px 4px; overflow: hidden; }
.page { position: relative; width: 798px; flex: none; display: flex; background: #fff; border: 2px solid #f3ae49; border-bottom: 0; overflow: hidden; font-family: Roboto, sans-serif; color: #1d1d1b; }
.edge { width: 11px; flex: none; background: #b8c605; }
.edge.right { background: linear-gradient(#003673 220px, #b8c605 220px); }
.sheet { flex: 1; min-width: 0; margin: 0 2px 0 24px; border: 1px dashed #b5b5b5; border-width: 0 1px; padding-left: 17px; overflow: hidden; }
.guide { position: absolute; left: 0; right: 0; top: 25px; border-top: 1px dashed #aaa; }
.academy { display: flex; justify-content: flex-end; gap: 10px; padding: 71px 66px 0 0; color: #828282; font: 700 25px/23px Inter, sans-serif; -webkit-text-stroke: 1px #828282; }
.academy svg { width: 34px; height: 54px; }
.academy div { padding-top: 4px; }
h1 { font-size: 26px; line-height: 34px; font-weight: 700; margin: 76px 0 0 20px; }
.years { font-size: 26px; line-height: 34px; font-weight: 700; color: #929292; margin-left: 20px; }
h3 { font-size: 17px; line-height: 24px; font-weight: 700; white-space: nowrap; }
.sheet > h3 { margin: 46px 0 0 18px; }
.note { font-size: 13px; line-height: 20px; color: #7d7d7d; margin: 7px 0 0 18px; }
.line { width: 670px; height: 250px; margin-top: -10px; }
.solid { fill: none; stroke: #9b9b9b; }
.dotted { stroke: #c8c8c8; stroke-dasharray: 1 1; }
.curve { fill: none; stroke: #b8c605; stroke-width: 4; }
.tag { fill: #fff; stroke: #333; stroke-width: 1; }
.val { font-size: 9px; font-weight: 500; text-anchor: middle; fill: #111; }
.axis { font-size: 12px; font-weight: 500; text-anchor: end; }
.month { font-size: 13px; font-weight: 500; text-anchor: middle; }
.duo { display: flex; margin: 34px 0 0 18px; }
.half { width: 332px; }
.second h3 { margin-left: 36px; }
.pie { width: 315px; height: 250px; margin: 10px 0 0 1px; }
.bars { width: 320px; height: 250px; margin-top: 2px; overflow: visible; }
.n { fill: #003673; } .y { fill: #f0dc00; } .g { fill: #b8c605; }
.plain .thumb { height: 17px; }
.status { height: 24px; flex: none; display: flex; align-items: center; background: #3a5791; color: #fff; border-top: 1px solid #27467f; font-size: 12px; padding: 0 5px 0 8px; }
.pg { border-right: 1px solid #c9d3e6; padding-right: 10px; line-height: 20px; }
.pct { margin-left: auto; border-left: 1px solid #c9d3e6; padding: 0 13px 0 8px; line-height: 20px; font-size: 11px; }
.status svg { width: 12px; height: 12px; }
.status input { appearance: none; width: 93px; height: 2px; margin: 0 6px; background: linear-gradient(90deg, #445a86 52%, #c9d3e6 52%); }
.status input::-webkit-slider-thumb { appearance: none; width: 8px; height: 8px; border-radius: 4px; background: #40527c; }
.rail { width: 14px; flex: none; background: #fff; border-right: 1px solid #333; justify-content: center; padding-bottom: 42px; }
.rail svg { width: 6px; height: 8px; }
</style>
